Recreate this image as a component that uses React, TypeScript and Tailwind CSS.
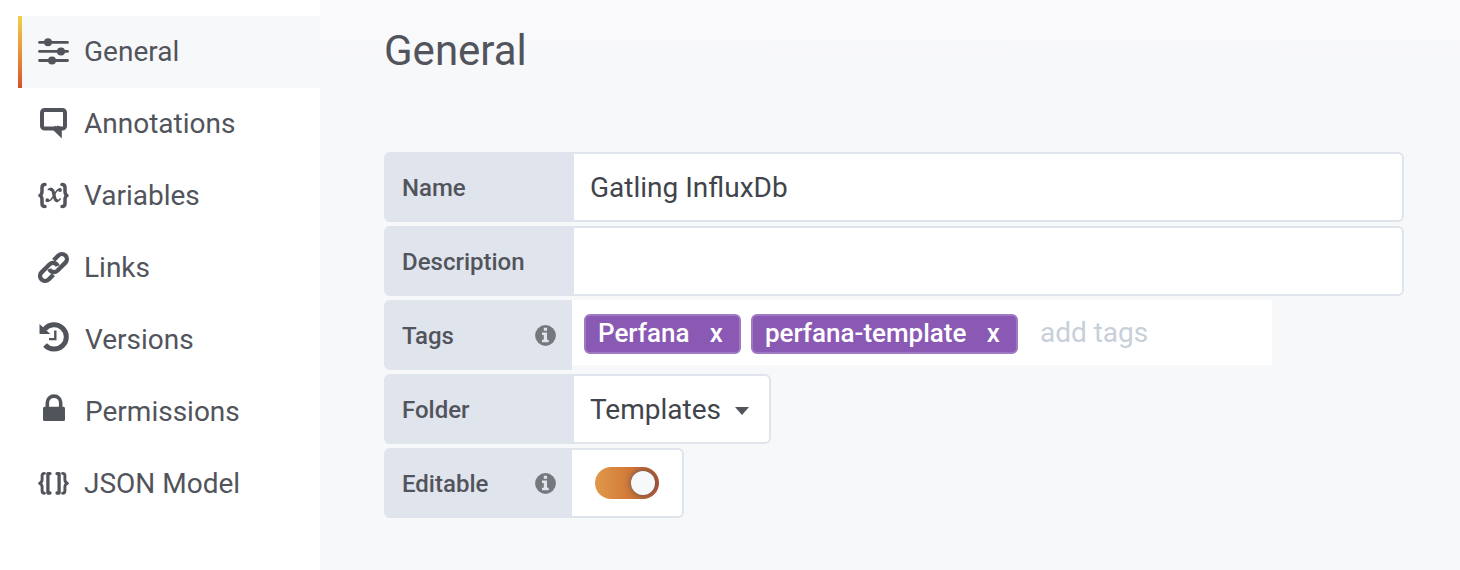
import type { ReactNode } from 'react';

function Glyph({ children }: { children: ReactNode }) {
  return (
    <svg className="h-9 w-8 shrink-0" viewBox="0 0 32 36" fill="none" stroke="currentColor" strokeLinecap="round" strokeLinejoin="round">
      {children}
    </svg>
  );
}

const SlidersIcon = () => (
  <Glyph>
    <path strokeWidth="2.8" d="M1.5 8.4h28M1.5 17.4h28M1.5 26.5h28" />
    <g fill="currentColor" stroke="none">
      <circle cx="10" cy="8.3" r="4" />
      <circle cx="23" cy="17.4" r="4" />
      <circle cx="14" cy="26.5" r="4" />
    </g>
  </Glyph>
);

const CommentIcon = () => (
  <Glyph>
    <rect x="4" y="4" width="23" height="18.6" rx="2.6" strokeWidth="4" />
    <path d="M13.5 22.5L23.8 32.5V21l-4.800-1.400-.4 1.400-2-1.600-.4 2z" fill="currentColor" stroke="none" />
  </Glyph>
);

const VariablesIcon = () => (
  <Glyph>
    <path strokeWidth="3.5" d="M7 6.400c-2.400 0-3 1-3 3v4.200c0 2-.6 3.200-2 3.900 1.400.7 2 1.900 2 3.900v4.200c0 2 .6 3 3 3" />
    <path strokeWidth="3.5" d="M24 6.400c2.400 0 3 1 3 3v4.200c0 2 .6 3.200 2 3.900-1.400.7-2 1.900-2 3.900v4.200c0 2-.6 3-3 3" />
    <path strokeWidth="3.200" d="M12.800 11.400c1.900-.2 2.200 1.200 2.700 3.400l1 4.200c.5 2.200.9 3.700 2.400 3.700" />
    <path strokeWidth="1.600" d="M10.400 11.500q1.400-.9 2.800-1M18.600 23.400c1.700.1 2.800-1.300 3.500-2.500M9.200 22.800c2.400 1 4.200-1.200 6.300-4.700s3.600-7.600 6.700-6.700" />
    <circle cx="9.300" cy="22.200" r="1.100" strokeWidth="1.600" />
    <circle cx="22" cy="12" r="1.100" strokeWidth="1.600" />
  </Glyph>
);

const LinksIcon = () => (
  <Glyph>
    <g transform="translate(15.500 17.500) rotate(-45)" strokeWidth="4.300" strokeLinecap="butt">
      <path d="M-5.200 5H-11.900A5 5 0 0 1-11.900-5H-.4A5 5 0 0 1 4 2" />
      <path d="M5.200-5H11.900A5 5 0 0 1 11.900 5H.4A5 5 0 0 1-4-2" />
    </g>
  </Glyph>
);

const HistoryIcon = () => (
  <Glyph>
    <path strokeWidth="5" strokeLinecap="butt" d="M6.600 7.200A12.200 12.200 0 1 1 7 23" />
    <path d="M1.500 2v9.200q0 .8.800.8h10z" fill="currentColor" stroke="none" />
    <path strokeWidth="2.400" strokeLinecap="butt" strokeLinejoin="miter" d="M17.300 8.600v8.500h-6.300" />
  </Glyph>
);

const LockIcon = () => (
  <Glyph>
    <rect x="5" y="12.700" width="22" height="14.300" rx="1.500" fill="currentColor" stroke="none" />
    <path strokeWidth="3.600" strokeLinecap="butt" d="M9.300 14V8.800a6.700 6.700 0 0 1 13.400 0V14" />
  </Glyph>
);

const JsonIcon = () => (
  <Glyph>
    <path strokeWidth="2.900" d="M6.400 7.400c-1.800 0-2.300.6-2.300 2.200v4.200c0 1.800-.8 2.800-2.500 3.500 1.700.7 2.500 1.700 2.500 3.500V25c0 1.600.5 2.200 2.300 2.200M24.600 7.400c1.800 0 2.300.6 2.300 2.200v4.200c0 1.800.8 2.800 2.500 3.500-1.700.7-2.500 1.700-2.500 3.500V25c0 1.600-.5 2.200-2.300 2.200" />
    <path strokeWidth="3.300" d="M12 7.600H9.900v19.400H12M19 7.600h2.100v19.400H19" />
  </Glyph>
);

const InfoIcon = () => (
  <svg className="ml-auto size-[21px]" viewBox="0 0 21 21">
    <circle cx="10.500" cy="10.500" r="10.400" fill="#75787d" />
    <path fill="#e0e4ed" d="M8.800 2.700h3.200v3H8.800zM7 7.500h5v7.200h1.700v2.500H7v-2.500h1.800V10H7z" />
  </svg>
);

const items = [
  { label: 'General', Icon: SlidersIcon },
  { label: 'Annotations', Icon: CommentIcon },
  { label: 'Variables', Icon: VariablesIcon },
  { label: 'Links', Icon: LinksIcon },
  { label: 'Versions', Icon: HistoryIcon },
  { label: 'Permissions', Icon: LockIcon },
  { label: 'JSON Model', Icon: JsonIcon },
];

function Label({ text, info = false }: { text: string; info?: boolean }) {
  return (
    <div className="flex h-[70px] w-[188px] shrink-0 items-center rounded-l-md bg-[#e0e4ed] pr-4 pl-[18px] text-2xl font-medium text-[#52545c]">
      <span className="pt-0.5">{text}</span>
      {info && <InfoIcon />}
    </div>
  );
}

function Tag({ text }: { text: string }) {
  return (
    <span className="flex h-10 items-center rounded-md border-2 border-[#a079c3] bg-[#8959b3] pr-[16px] pb-px pl-3 text-[26px] font-medium text-white">
      {text}
      <span className="ml-[20.4px]">x</span>
    </span>
  );
}

export default function App() {
  return (
    <div className="flex h-[570px] w-[1460px] overflow-hidden bg-white font-['Roboto',sans-serif] text-[#52545c]">
      <nav className="w-80 shrink-0 pt-4 pl-[18px]">
        {items.map(({ label, Icon }, i) => (
          <div key={label} className={i === 0 ? 'flex h-[72px] items-center bg-[#f7f8fa]' : 'flex h-[72px] items-center'}>
            <div className={i === 0 ? 'h-full w-1 bg-linear-to-b from-[#f0d04a] to-[#d9502c]' : 'w-1'} />
            <div className="flex items-center gap-[14px] pl-4 text-[28px] leading-9">
              <Icon />
              <span className={label === 'Versions' || label === 'Permissions' ? 'pl-px' : ''}>{label}</span>
            </div>
          </div>
        ))}
      </nav>
      <main className="flex-1 bg-[#f7f8fa] bg-linear-to-b from-[#fafafc] to-[#f7f8fa] to-[80px] pl-16">
        <h1 className="h-[152px] pt-[26px] text-[42px] leading-[50px]">General</h1>
        <div className="flex flex-col gap-1">
          <div className="flex">
            <Label text="Name" />
            <div className="flex h-[70px] w-[832px] items-center rounded-r-md border-2 border-[#e0e4ed] bg-white pt-0.5 pl-4 text-[28px] text-[#41444b]">Gatling InfluxDb</div>
          </div>
          <div className="flex">
            <Label text="Description" />
            <div className="h-[70px] w-[832px] rounded-r-md border-2 border-[#e0e4ed] bg-white" />
          </div>
          <div className="flex">
            <Label text="Tags" info />
            <div className="flex h-[65px] w-[700px] items-start gap-[10px] bg-white pt-[14px] pl-3">
              <Tag text="Perfana" />
              <Tag text="perfana-template" />
              <span className="ml-3 text-[28px] leading-[38px] text-[#c7d0d9]">add tags</span>
            </div>
          </div>
          <div className="flex">
            <Label text="Folder" />
            <div className="flex h-[70px] w-[199px] items-center rounded-r-md border-2 border-[#e0e4ed] bg-white pt-0.5 pl-4 text-[28px] text-[#41444b]">
              Templates
              <svg className="mt-0.5 ml-[14px] h-2 w-[14px]" viewBox="0 0 14 8">
                <path d="M0 0h14L7 8z" fill="#52545c" />
              </svg>
            </div>
          </div>
          <div className="flex">
            <Label text="Editable" info />
            <div className="flex h-[70px] w-[112px] items-center rounded-r-md border-2 border-l-0 border-[#e0e4ed] bg-white pl-[23px]">
              <div className="flex h-8 w-16 items-center justify-end overflow-hidden rounded-full bg-linear-to-r from-[#e0994a] via-[#cf7535] via-60% to-[#b8532c] pr-1">
                <div className="size-6 rounded-full bg-[#f7f8fa] shadow-[0_0_6px_#52545c]" />
              </div>
            </div>
          </div>
        </div>
      </main>
    </div>
  );
}
